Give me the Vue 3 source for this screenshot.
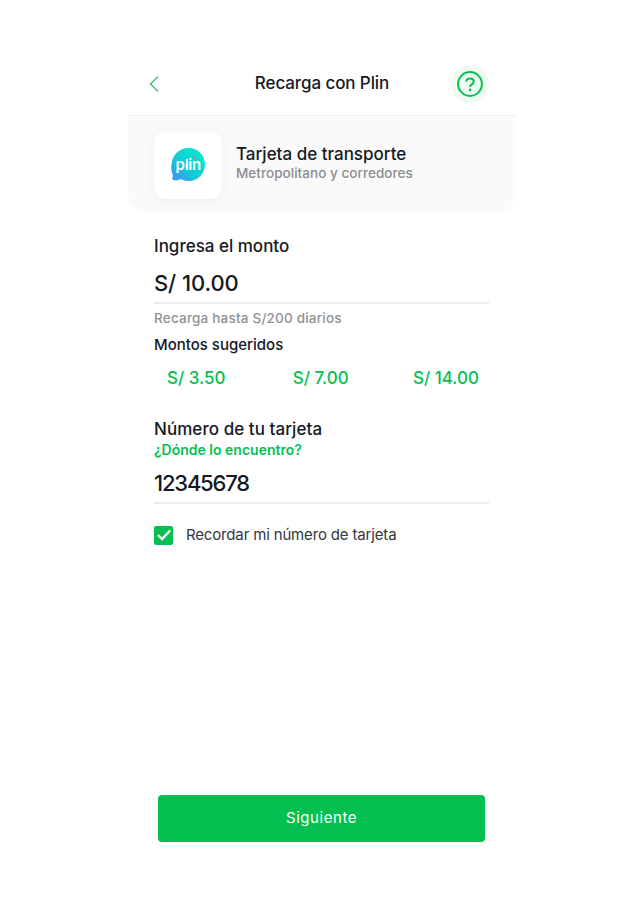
<template>
  <div class="page">
    <main class="phone">
      <header class="top">
        <button class="back" aria-label="Volver">
          <svg width="12" height="18" viewBox="0 0 12 18"><path d="M10 1.5 2.5 9l7.5 7.5" fill="none" stroke="#2fcb6b" stroke-width="1.4"/></svg>
        </button>
        <h1>Recarga con Plin</h1>
        <div class="help">
          <svg width="26" height="26" viewBox="0 0 26 26">
            <circle cx="13" cy="13" r="11.9" fill="none" stroke="#05c051" stroke-width="2"/>
            <path d="M9.400 10.800c0-2.100 1.600-3.300 3.700-3.300s3.600 1.200 3.600 3c0 1.500-.8 2.200-1.900 2.900-1.100.7-1.700 1.200-1.700 2.500" fill="none" stroke="#05c051" stroke-width="2"/>
            <circle cx="13.100" cy="18.900" r="1.300" fill="#05c051"/>
          </svg>
        </div>
      </header>
      <section class="service">
        <div class="logo">
          <svg width="36" height="36" viewBox="0 0 36 36">
            <defs>
              <linearGradient id="plin" x1="0.1" y1="0.95" x2="0.75" y2="0.2">
                <stop offset="0" stop-color="#3a97f5"/>
                <stop offset="0.45" stop-color="#14c8d6"/>
                <stop offset="1" stop-color="#06e4d0"/>
              </linearGradient>
            </defs>
            <path d="M18.5 1C27.8 1 35 8.300 35 17.500S27.800 34 18.500 34c-3 0-5.500-.7-7.700-2-1.500.9-3.500 1.300-6.300 1.200-2 0-3-1.700-1.900-3.200.4-.6.500-1.200.2-1.900C1.300 25 1 21 1.500 17.500 2 8.300 9.200 1 18.500 1Z" fill="url(#plin)"/>
            <text x="18.200" y="22.500" text-anchor="middle" class="plin-word">plin</text>
            <circle cx="24.300" cy="10.500" r="0.900" fill="#f0567a"/>
          </svg>
        </div>
        <div class="service-text">
          <h2>Tarjeta de transporte</h2>
          <p>Metropolitano y corredores</p>
        </div>
      </section>
      <section class="form">
        <h3 class="amount-label">Ingresa el monto</h3>
        <div class="value amount-value">S/ 10.00</div>
        <p class="hint">Recarga hasta S/200 diarios</p>
        <h4>Montos sugeridos</h4>
        <div class="chips">
          <span v-for="chip in chips" :key="chip">{{ chip }}</span>
        </div>
        <h3 class="card-label">Número de tu tarjeta</h3>
        <a class="where">¿Dónde lo encuentro?</a>
        <div class="value card-value">12345678</div>
        <label class="remember">
          <span class="check">
            <svg width="14" height="12" viewBox="0 0 14 12"><path d="M1 6 5.100 10 13 1.500" fill="none" stroke="#fff" stroke-width="2.400"/></svg>
          </span>
          <span>Recordar mi número de tarjeta</span>
        </label>
      </section>
      <button class="next">Siguiente</button>
    </main>
  </div>
</template>

<script setup>
const chips = ['S/ 3.50', 'S/ 7.00', 'S/ 14.00']
</script>

<style>
html, body { margin: 0; background: #fff; }
</style>

<style scoped>
.page {
  height: 920px;
  display: flex;
  justify-content: center;
  font-family: "Inter", "Noto Sans", sans-serif;
  color: #14191f;
}
.phone {
  width: 388px;
  padding-top: 62px;
  box-sizing: border-box;
  display: flex;
  flex-direction: column;
}
.top {
  height: 53px;
  border-bottom: 1px solid #efefef;
  position: relative;
  display: flex;
  align-items: flex-start;
  justify-content: center;
}
.top h1 {
  margin: 11px 0 0;
  font-size: 17px;
  line-height: 20px;
  font-weight: 500;
  letter-spacing: -0.1px;
}
.back {
  position: absolute;
  left: 20px;
  top: 13px;
  padding: 0;
  border: 0;
  background: none;
  height: 18px;
}
.help {
  position: absolute;
  left: 323px;
  top: 3px;
  width: 38px;
  height: 38px;
  border-radius: 50%;
  background: #eefaf2;
  display: flex;
  align-items: center;
  justify-content: center;
}
.service {
  height: 97px;
  box-sizing: border-box;
  background: #fafafa;
  border-radius: 0 0 20px 20px;
  padding: 15px 26px;
  display: flex;
  gap: 14px;
}
.logo {
  width: 68px;
  height: 68px;
  border-radius: 12px;
  background: #fff;
  box-shadow: 0 2px 8px rgba(0, 0, 0, 0.05);
  display: flex;
  align-items: center;
  justify-content: center;
}
.plin-word {
  font-size: 15px;
  font-weight: 600;
  fill: #fff;
  letter-spacing: -0.3px;
  font-family: "Inter", sans-serif;
}
.service-text { padding-top: 13px; }
.service-text h2 {
  margin: 0;
  font-size: 17px;
  line-height: 20px;
  font-weight: 500;
}
.service-text p {
  margin: 1px 0 0;
  font-size: 13.5px;
  line-height: 17px;
  font-weight: 500;
  color: #8a8d90;
  letter-spacing: 0.04px;
}
.form {
  padding: 0 27px 0 26px;
  display: flex;
  flex-direction: column;
}
h3, h4 { margin: 0; font-weight: 500; }
h3 { font-size: 17px; line-height: 20px; }
.amount-label { margin-top: 23px; }
.value {
  font-size: 22px;
  line-height: 28px;
  font-weight: 500;
  border-bottom: 2px solid #ececec;
}
.amount-value { margin-top: 13px; padding-bottom: 5px; letter-spacing: -0.1px; }
.hint {
  margin: 6px 0 0;
  font-size: 13.5px;
  line-height: 17px;
  font-weight: 500;
  color: #8f9193;
  letter-spacing: 0.2px;
}
h4 { margin-top: 9px; font-size: 15px; line-height: 18px; }
.chips {
  display: flex;
  justify-content: space-between;
  padding: 0 10px 0 13px;
  margin-top: 14px;
  font-size: 17px;
  line-height: 20px;
  font-weight: 500;
  color: #05c051;
}
.chips span:nth-child(2) { margin-left: 3px; }
.card-label { margin-top: 31px; letter-spacing: 0.06px; }
.where {
  margin-top: 3px;
  font-size: 14px;
  line-height: 16px;
  font-weight: 600;
  color: #05c051;
}
.card-value { margin-top: 11px; padding-bottom: 5px; letter-spacing: -1.2px; }
.remember {
  margin-top: 21px;
  display: flex;
  align-items: center;
  gap: 13px;
  font-size: 15px;
  line-height: 20px;
  letter-spacing: -0.16px;
  color: #33373b;
}
.check {
  width: 19px;
  height: 19px;
  border-radius: 2px;
  background: #05c051;
  display: flex;
  align-items: center;
  justify-content: center;
}
.next {
  margin: auto 0 78px 30px;
  width: 327px;
  height: 47px;
  padding-bottom: 2px;
  border: 0;
  border-radius: 4px;
  background: #05c051;
  color: #fff;
  font: 400 15px/20px "Inter", sans-serif;
  letter-spacing: 0.55px;
}
</style>
